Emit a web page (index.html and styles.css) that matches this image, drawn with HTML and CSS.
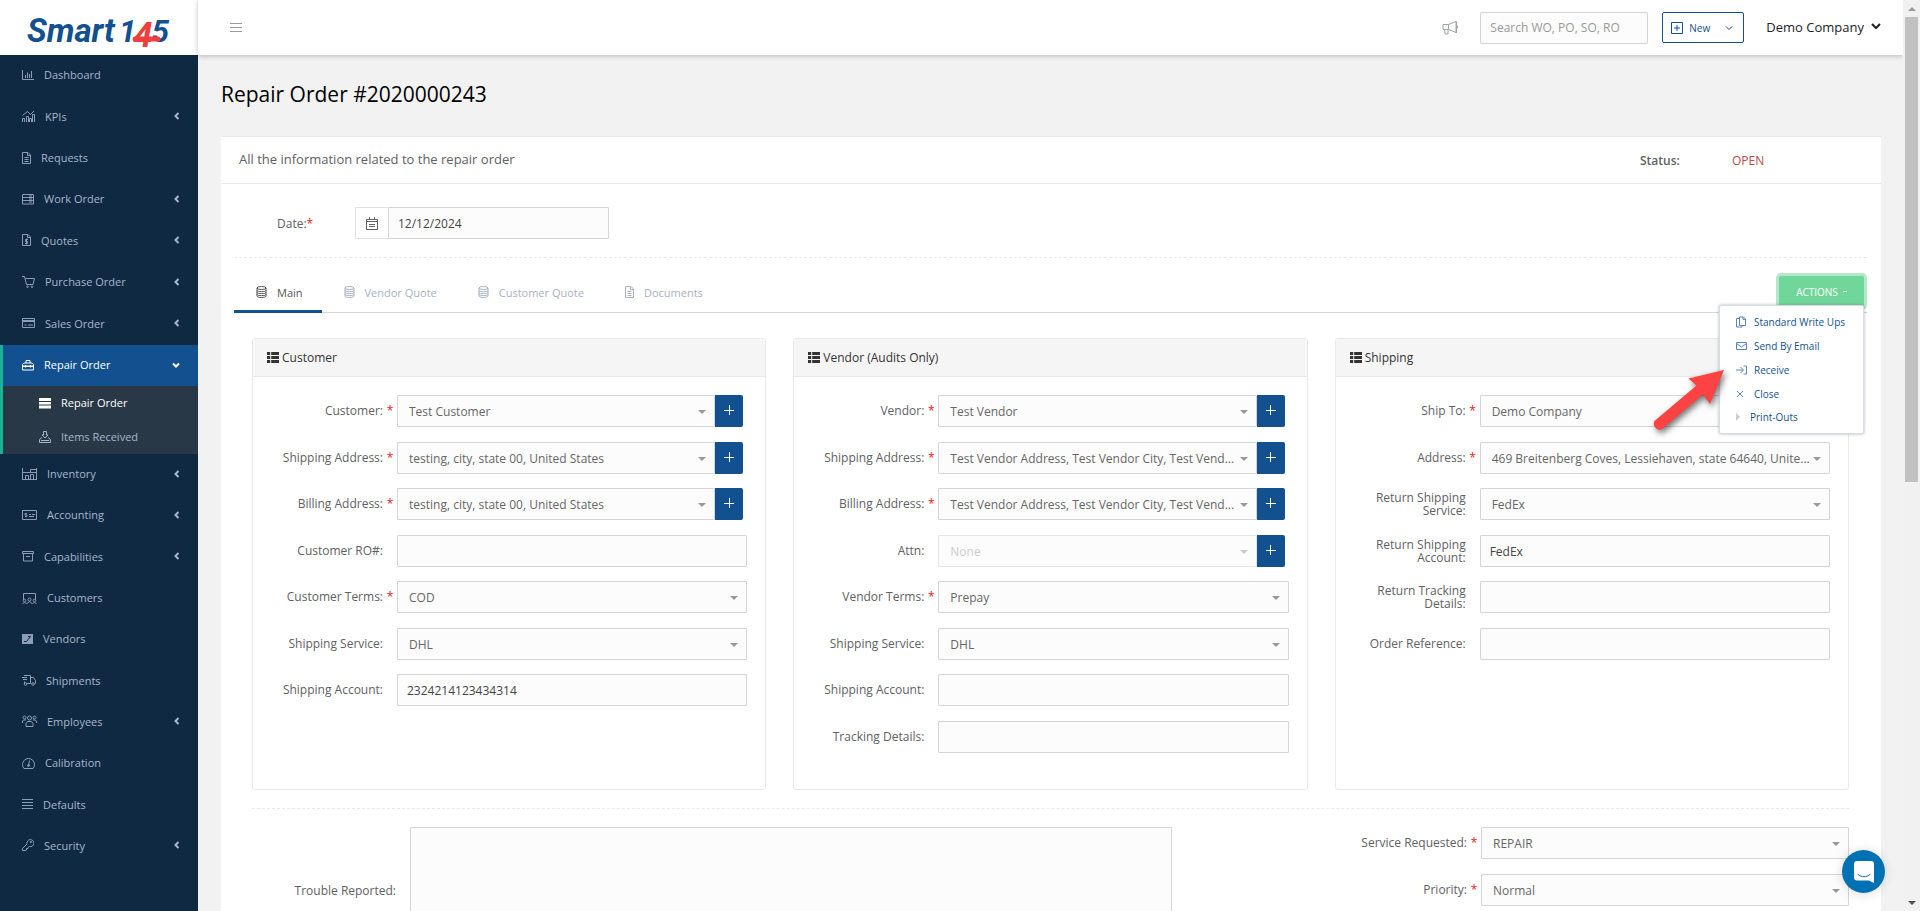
FILE: index.html
```html
<!DOCTYPE html>
<html lang="en">
<head>
<meta charset="utf-8">
<title>Repair Order #2020000243</title>
<link rel="stylesheet" href="styles.css">
</head>
<body>
<svg class="sprite" aria-hidden="true">
  <symbol id="i-bars" viewBox="0 0 12 12"><path d="M.5 1v9.500H12M3.500 9V6M5.500 9V3.500M7.500 9V5M9.500 9V2"/></symbol>
  <symbol id="i-kpi" viewBox="0 0 13 12"><path d="M.5 12V8.500h2V12M4.500 12V6.500h2V12M7.500 12V8.500h2V12M10.500 12V4.500h2V12M.5 5.500l5-4 3 3L12 1"/></symbol>
  <symbol id="i-file" viewBox="0 0 9 12"><path d="M.5.5H6L8.500 3v8.500h-8zM5.500.5V3.500h3M2.500 5.500h4M2.500 7.500h4M2.500 9.500h4"/></symbol>
  <symbol id="i-work" viewBox="0 0 12 12"><path d="M.5 1.500h11v9.500H.5zM.5 4.500h11M.5 7.500h11M7 3h3M7 6h3M7 9h3"/></symbol>
  <symbol id="i-quote" viewBox="0 0 9 12"><path d="M.5.5H6L8.500 3v8.500h-8zM5.500.5V3.500h3M6 5.500H3.500v2h2v2H3M4.500 4.500v6"/></symbol>
  <symbol id="i-cart" viewBox="0 0 13 12"><path d="M0 .5h2.500l2 8H11l1.500-6H3.500"/><circle cx="5.500" cy="10.700" r=".8"/><circle cx="10" cy="10.700" r=".8"/></symbol>
  <symbol id="i-card" viewBox="0 0 13 12"><path d="M.5 1.500h12v9H.5zM.5 3.500h12M.5 4.500h12M2.500 8h2M6 8h5"/></symbol>
  <symbol id="i-tool" viewBox="0 0 12 12"><path d="M.5 7V5.500L2 4h8l1.500 1.500V7zM.5 7v4h11V7M4 4V1.500h4V4M3.500 6v2.500M8.500 6v2.500M0 7.500h12"/></symbol>
  <symbol id="i-server" viewBox="0 0 12 12"><path class="solid" d="M0 1h12v3H0zM0 5h12v2.500H0zM0 8.500h12v3H0z"/></symbol>
  <symbol id="i-inbox" viewBox="0 0 12 12"><path d="M4.500.5h3V4H9L6 7 3 4h1.500zM3 6.500.5 8.500v3h11v-3L9 6.500M2 9.500h8"/></symbol>
  <symbol id="i-store" viewBox="0 0 15 12"><path d="M.5 0v12M.5 4.500h8v-3h6M14.500 0v12M.5 11.500h14M3.500 11V7.500h3V11M8.500 11V6.500h3V11M8.500 4.500h6"/></symbol>
  <symbol id="i-money" viewBox="0 0 15 12"><path d="M.5 1.500h14v9H.5zM5 4.500H3v1.500h2v1.500H3M7 5.500h2M10 5.500h3M7 7.500h5"/></symbol>
  <symbol id="i-box" viewBox="0 0 12 12"><path d="M.5 1.500h11v2H.5zM1.500 3.500v7.500h9V3.500M4 6.500h4"/></symbol>
  <symbol id="i-people" viewBox="0 0 15 12"><path d="M1.500 8V1.500h12V8M.5 12l2-2 2 2 3-2.500 3 2.500 2-2 2 2"/><circle cx="2.500" cy="8.500" r="1.300"/><circle cx="7.500" cy="7.500" r="1.500"/><circle cx="12.500" cy="8.500" r="1.300"/></symbol>
  <symbol id="i-check" viewBox="0 0 11 12"><path class="solid" d="M0 1h11v10H0z"/><path class="cut" d="M2 8.500h2.500l4-5H6"/></symbol>
  <symbol id="i-truck" viewBox="0 0 14 12"><path d="M2 1.500h6.500v8H5M8.500 3.500h3l2 3v3h-1M0 3.500h5M1 5.500h4M2.500 7.500v2"/><circle cx="3.500" cy="10" r="1.300"/><circle cx="11" cy="10" r="1.300"/></symbol>
  <symbol id="i-team" viewBox="0 0 15 12"><circle cx="2.500" cy="2.500" r="1.500"/><circle cx="7.500" cy="3" r="2"/><circle cx="12.500" cy="2.500" r="1.500"/><path d="M.5 8V6l1.500-1h2M14.500 8V6L13 5h-2M4 11.500V8.500L5.500 6.500h4L11 8.500v3z"/></symbol>
  <symbol id="i-gauge" viewBox="0 0 13 12"><path d="M2 11.500A6 6 0 1 1 11 11.500zM6.500 9l1-5.500"/><circle cx="6.500" cy="8.500" r="1"/></symbol>
  <symbol id="i-lines" viewBox="0 0 11 12"><path d="M0 1.500h11M0 4.500h11M0 7.500h11M0 10.500h11"/></symbol>
  <symbol id="i-key" viewBox="0 0 12 12"><path d="M5 5a3.500 3.500 0 1 1 2.500 2.500L6 8.500v1H4.500V11L3 11.500H.5v-2z"/><circle cx="9" cy="3" r=".7"/></symbol>
  <symbol id="i-db" viewBox="0 0 11 12"><ellipse cx="5.500" cy="2" rx="4.500" ry="1.500"/><path d="M1 2v8c0 2 9 2 9 0V2M1 4.500c0 1.500 9 1.500 9 0M1 6.500c0 1.500 9 1.500 9 0M1 8.500c0 1.500 9 1.500 9 0"/></symbol>
  <symbol id="i-list" viewBox="0 0 12 11"><path class="solid" d="M0 0h3.200v3H0zM4.200 0H12v3H4.200zM0 4h3.200v3H0zM4.200 4H12v3H4.200zM0 8h3.200v3H0zM4.200 8H12v3H4.200z"/></symbol>
  <symbol id="i-left" viewBox="0 0 6 8"><path d="M4.500 1 1.500 4l3 3"/></symbol>
  <symbol id="i-down" viewBox="0 0 8 6"><path d="M1 1.500l3 3 3-3"/></symbol>
</svg>

<div class="app">
  <aside class="sidebar">
    <a class="brand" href="#" aria-label="Smart 145">
      <svg class="logo" viewBox="0 0 150 40" width="150" height="40">
        <text x="0" y="29" font-size="33">Smart</text>
        <text x="92" y="29" font-size="31">1<tspan class="logo-red" font-size="35" dy="5" dx="-3">4</tspan><tspan dy="-5" dx="-1">5</tspan></text>
        <path class="swoosh" d="M108 26h23"/>
      </svg>
    </a>
    <nav class="menu">
      <ul class="menu-group before">
        <li><a href="#"><svg width="12" height="12"><use href="#i-bars"/></svg>Dashboard</a></li>
        <li><a href="#"><svg width="13" height="12"><use href="#i-kpi"/></svg>KPIs<svg class="caret" width="6" height="8"><use href="#i-left"/></svg></a></li>
        <li><a href="#"><svg width="9" height="12"><use href="#i-file"/></svg>Requests</a></li>
        <li><a href="#"><svg width="12" height="12"><use href="#i-work"/></svg>Work Order<svg class="caret" width="6" height="8"><use href="#i-left"/></svg></a></li>
        <li><a href="#"><svg width="9" height="12"><use href="#i-quote"/></svg>Quotes<svg class="caret" width="6" height="8"><use href="#i-left"/></svg></a></li>
        <li><a href="#"><svg width="13" height="12"><use href="#i-cart"/></svg>Purchase Order<svg class="caret" width="6" height="8"><use href="#i-left"/></svg></a></li>
        <li><a href="#"><svg width="13" height="12"><use href="#i-card"/></svg>Sales Order<svg class="caret" width="6" height="8"><use href="#i-left"/></svg></a></li>
      </ul>
      <div class="menu-open">
        <a class="current" href="#"><svg width="12" height="12"><use href="#i-tool"/></svg>Repair Order<svg class="caret" width="8" height="6"><use href="#i-down"/></svg></a>
        <ul class="submenu">
          <li><a class="on" href="#"><svg width="12" height="12"><use href="#i-server"/></svg>Repair Order</a></li>
          <li><a href="#"><svg width="12" height="12"><use href="#i-inbox"/></svg>Items Received</a></li>
        </ul>
      </div>
      <ul class="menu-group after">
        <li><a href="#"><svg width="15" height="12"><use href="#i-store"/></svg>Inventory<svg class="caret" width="6" height="8"><use href="#i-left"/></svg></a></li>
        <li><a href="#"><svg width="15" height="12"><use href="#i-money"/></svg>Accounting<svg class="caret" width="6" height="8"><use href="#i-left"/></svg></a></li>
        <li><a href="#"><svg width="12" height="12"><use href="#i-box"/></svg>Capabilities<svg class="caret" width="6" height="8"><use href="#i-left"/></svg></a></li>
        <li><a href="#"><svg width="15" height="12"><use href="#i-people"/></svg>Customers</a></li>
        <li><a href="#"><svg width="11" height="12"><use href="#i-check"/></svg>Vendors</a></li>
        <li><a href="#"><svg width="14" height="12"><use href="#i-truck"/></svg>Shipments</a></li>
        <li><a href="#"><svg width="15" height="12"><use href="#i-team"/></svg>Employees<svg class="caret" width="6" height="8"><use href="#i-left"/></svg></a></li>
        <li><a href="#"><svg width="13" height="12"><use href="#i-gauge"/></svg>Calibration</a></li>
        <li><a href="#"><svg width="11" height="12"><use href="#i-lines"/></svg>Defaults</a></li>
        <li><a href="#"><svg width="12" height="12"><use href="#i-key"/></svg>Security<svg class="caret" width="6" height="8"><use href="#i-left"/></svg></a></li>
      </ul>
    </nav>
  </aside>

  <div class="main">
    <header class="topbar">
      <button class="plain burger" type="button" aria-label="Toggle menu"><svg width="12" height="12" viewBox="0 0 12 12"><path d="M0 1.500h12M0 5.500h12M0 9.500h12"/></svg></button>
      <button class="plain horn" type="button" aria-label="Announcements"><svg width="16" height="14" viewBox="0 0 16 14"><path d="M1 3.500h5.500v5H1zM6.500 3.500l7.500-3v11l-7.500-3M14.500.5V12M2.500 8.500l.5 4.500h3V8.500M14.500 5h1v2h-1"/></svg></button>
      <input class="search" type="text" placeholder="Search WO, PO, SO, RO" aria-label="Search">
      <button class="new" type="button"><svg width="12" height="12" viewBox="0 0 12 12"><path d="M.5.5h11v11H.5zM6 3v6M3 6h6"/></svg>New<svg class="new-caret" width="8" height="6"><use href="#i-down"/></svg></button>
      <button class="plain account" type="button">Demo Company<svg width="10" height="7" viewBox="0 0 10 7"><path d="M1 1l4 4 4-4"/></svg></button>
    </header>

    <main class="content">
      <h1>Repair Order #2020000243</h1>
      <section class="box">
        <div class="box-head">
          <h2>All the information related to the repair order</h2>
          <span class="status">Status:</span><span class="status-value">OPEN</span>
        </div>
        <div class="box-body">
          <div class="date-row">
            <label for="date">Date:<span class="red">*</span></label>
            <span class="date-icon"><svg width="12" height="13" viewBox="0 0 12 13"><path d="M.5 2.500h11v10H.5zM.5 4.500h11M3.500 0v2.500M8.500 0v2.500M3 7.500h6M3 9.500h6"/></svg></span>
            <input id="date" type="text" value="12/12/2024">
          </div>

          <div class="tabs">
            <a class="tab active" href="#"><svg width="11" height="12"><use href="#i-db"/></svg>Main</a>
            <a class="tab" href="#"><svg width="11" height="12"><use href="#i-db"/></svg>Vendor Quote</a>
            <a class="tab" href="#"><svg width="11" height="12"><use href="#i-db"/></svg>Customer Quote</a>
            <a class="tab" href="#"><svg width="9" height="12"><use href="#i-file"/></svg>Documents</a>
            <div class="actions">
              <button class="actions-btn" type="button">ACTIONS<span class="actions-caret"></span></button>
              <div class="dropdown">
                <a href="#"><svg width="11" height="12" viewBox="0 0 11 12"><path d="M3.500 1h4L9.500 3v6.500h-6zM3.500 2.500h-3v8.500h5.500V9.500M7 1v2.500h2.500"/></svg>Standard Write Ups</a>
                <a href="#"><svg width="11" height="12" viewBox="0 0 11 12"><path d="M.5 2.500h10v7H.5zM.5 3.500l5 3.500 5-3.500"/></svg>Send By Email</a>
                <a href="#"><svg width="11" height="12" viewBox="0 0 11 12"><path d="M0 6h7M4.500 3l3 3-3 3M7.500 2h3v8h-3"/></svg>Receive</a>
                <a href="#"><svg width="11" height="12" viewBox="0 0 11 12"><path d="M1 3l6 6M7 3L1 9"/></svg>Close</a>
                <a class="sub" href="#"><svg width="4" height="8" viewBox="0 0 4 8"><path class="tri" d="M0 0l4 4-4 4z"/></svg>Print-Outs</a>
                <svg class="pointer" width="84" height="76" viewBox="0 0 84 76"><path d="M75 7 39.500 15.500 47.500 22.500 5.500 58A6 6 0 0 0 12.500 66.500L54 31.500 61 41Z"/></svg>
              </div>
            </div>
          </div>

          <div class="pane">
            <div class="cards">
              <section class="card">
                <h3><svg width="12" height="11"><use href="#i-list"/></svg>Customer</h3>
                <div class="fields">
                  <div class="row"><label for="c1">Customer:<span class="req">*</span></label><div class="sel"><select id="c1"><option>Test Customer</option></select></div><button class="add" type="button" aria-label="Add customer"></button></div>
                  <div class="row"><label for="c2">Shipping Address:<span class="req">*</span></label><div class="sel"><select id="c2"><option>testing, city, state 00, United States</option></select></div><button class="add" type="button" aria-label="Add shipping address"></button></div>
                  <div class="row"><label for="c3">Billing Address:<span class="req">*</span></label><div class="sel"><select id="c3"><option>testing, city, state 00, United States</option></select></div><button class="add" type="button" aria-label="Add billing address"></button></div>
                  <div class="row"><label for="c4">Customer RO#:</label><input id="c4" type="text"></div>
                  <div class="row"><label for="c5">Customer Terms:<span class="req">*</span></label><div class="sel"><select id="c5"><option>COD</option></select></div></div>
                  <div class="row"><label for="c6">Shipping Service:</label><div class="sel"><select id="c6"><option>DHL</option></select></div></div>
                  <div class="row"><label for="c7">Shipping Account:</label><input id="c7" type="text" value="2324214123434314"></div>
                </div>
              </section>
              <section class="card">
                <h3><svg width="12" height="11"><use href="#i-list"/></svg>Vendor (Audits Only)</h3>
                <div class="fields">
                  <div class="row"><label for="v1">Vendor:<span class="req">*</span></label><div class="sel"><select id="v1"><option>Test Vendor</option></select></div><button class="add" type="button" aria-label="Add vendor"></button></div>
                  <div class="row"><label for="v2">Shipping Address:<span class="req">*</span></label><div class="sel"><select id="v2"><option>Test Vendor Address, Test Vendor City, Test Vend...</option></select></div><button class="add" type="button" aria-label="Add shipping address"></button></div>
                  <div class="row"><label for="v3">Billing Address:<span class="req">*</span></label><div class="sel"><select id="v3"><option>Test Vendor Address, Test Vendor City, Test Vend...</option></select></div><button class="add" type="button" aria-label="Add billing address"></button></div>
                  <div class="row"><label for="v4">Attn:</label><div class="sel off"><select id="v4" disabled><option>None</option></select></div><button class="add" type="button" aria-label="Add contact"></button></div>
                  <div class="row"><label for="v5">Vendor Terms:<span class="req">*</span></label><div class="sel"><select id="v5"><option>Prepay</option></select></div></div>
                  <div class="row"><label for="v6">Shipping Service:</label><div class="sel"><select id="v6"><option>DHL</option></select></div></div>
                  <div class="row"><label for="v7">Shipping Account:</label><input id="v7" type="text"></div>
                  <div class="row"><label for="v8">Tracking Details:</label><input id="v8" type="text"></div>
                </div>
              </section>
              <section class="card">
                <h3><svg width="12" height="11"><use href="#i-list"/></svg>Shipping</h3>
                <div class="fields">
                  <div class="row"><label for="s1">Ship To:<span class="req">*</span></label><div class="sel"><select id="s1"><option>Demo Company</option></select></div></div>
                  <div class="row"><label for="s2">Address:<span class="req">*</span></label><div class="sel"><select id="s2"><option>469 Breitenberg Coves, Lessiehaven, state 64640, Unite...</option></select></div></div>
                  <div class="row"><label for="s3">Return Shipping Service:</label><div class="sel"><select id="s3"><option>FedEx</option></select></div></div>
                  <div class="row"><label for="s4">Return Shipping Account:</label><input id="s4" type="text" value="FedEx"></div>
                  <div class="row"><label for="s5">Return Tracking Details:</label><input id="s5" type="text"></div>
                  <div class="row"><label for="s6">Order Reference:</label><input id="s6" type="text"></div>
                </div>
              </section>
            </div>

            <div class="lower">
              <label for="trouble">Trouble Reported:</label>
              <textarea id="trouble"></textarea>
              <div class="fields-lower">
                <div class="row"><label for="l1">Service Requested:<span class="req">*</span></label><div class="sel"><select id="l1"><option>REPAIR</option></select></div></div>
                <div class="row"><label for="l2">Priority:<span class="req">*</span></label><div class="sel"><select id="l2"><option>Normal</option></select></div></div>
              </div>
            </div>
          </div>
        </div>
      </section>
    </main>
  </div>

  <div class="scrollbar" aria-hidden="true">
    <span class="scroll-up"></span>
    <span class="scroll-thumb"></span>
    <span class="scroll-down"></span>
  </div>
</div>

<button class="chat" type="button" aria-label="Open chat"><svg width="20" height="22" viewBox="0 0 20 22"><path class="bubble" d="M3 0h14a3 3 0 0 1 3 3v19l-5-2.500H3a3 3 0 0 1-3-3V3a3 3 0 0 1 3-3z"/><path class="smile" d="M4 13.500c3.500 3 8.500 3 12 0"/></svg></button>
</body>
</html>
```

FILE: styles.css
```css
* { box-sizing: border-box; }

html, body { height: 100%; }

body {
  margin: 0;
  overflow: hidden;
  background: #f2f2f2;
  color: #5e6163;
  font-family: "Open Sans", "Noto Sans", sans-serif;
  font-size: 12px;
}

h1, h2, h3, ul { margin: 0; padding: 0; font-weight: 400; }
ul { list-style: none; }
a { color: inherit; text-decoration: none; }
button, input, select, textarea { font-family: inherit; font-size: 12px; }
svg { flex: none; fill: none; stroke: currentColor; stroke-width: 1; }
.sprite { position: absolute; width: 0; height: 0; }
.solid { fill: currentColor; stroke: none; }
.cut { stroke: #0f2942; }
.red { color: #e21b1b; }

.app { display: flex; height: 100vh; }

/* Sidebar */
.sidebar {
  flex: none;
  width: 198px;
  background: #0f2942;
  color: #a7b6cc;
  font-size: 11px;
}
.brand {
  display: flex;
  height: 55px;
  padding: 13px 0 0 27px;
  background: #fff;
}
.logo {
  overflow: visible;
  fill: #12508f;
  stroke: none;
  font-family: Roboto, "Open Sans", sans-serif;
  font-weight: 700;
  font-style: italic;
}
.logo-red { fill: #f03e3e; }
.swoosh { fill: none; stroke: #f03e3e; stroke-width: 5; stroke-linecap: round; }

.menu-group { display: grid; grid-auto-rows: 1fr; }
.before { height: 290px; }
.after { height: 413px; }
.menu-group a, .current {
  display: flex;
  align-items: center;
  gap: 10px;
  height: 100%;
  padding: 0 18px 2px 22px;
}
.menu-group svg { color: #8b9dba; }
.menu-group .caret, .current .caret { margin-left: auto; color: inherit; stroke-width: 2; }
.menu-open { border-left: 3px solid #1ab394; }
.current {
  height: 41px;
  padding-left: 19px;
  background: #12508f;
  color: #fff;
  font-weight: 500;
}
.submenu { background: #293846; }
.submenu a {
  display: flex;
  align-items: center;
  gap: 10px;
  height: 34px;
  padding: 0 0 1px 36px;
}
.submenu .on { color: #fff; font-weight: 500; }

/* Top bar */
.main { flex: 1; min-width: 0; }
.topbar {
  display: flex;
  align-items: center;
  height: 55px;
  padding: 0 22px 0 32px;
  background: #fff;
  box-shadow: 0 1px 5px rgba(0, 0, 0, .25);
}
.plain { display: flex; align-items: center; padding: 0; border: 0; background: none; }
.burger { color: #999c9e; }
.horn { margin-left: auto; color: #a0a3a6; }
.search {
  width: 168px;
  height: 33px;
  margin: 0 14px 0 22px;
  padding: 0 9px;
  border: 1px solid #d8d8d8;
  background: #fcfcfc;
}
.search::placeholder { color: #999; }
.new {
  display: flex;
  align-items: center;
  gap: 6px;
  width: 82px;
  height: 31px;
  padding: 0 10px 0 8px;
  border: 1px solid #12508f;
  border-radius: 2px;
  background: #fff;
  color: #12508f;
  font-size: 10px;
}
.new-caret { margin-left: auto; }
.account { gap: 7px; margin-left: 22px; padding-bottom: 2px; color: #222; font-size: 13px; }
.account svg { stroke-width: 2; }

/* Page */
.content { padding: 0 22px 0 23px; }
h1 { height: 81px; color: #000; font-size: 21px; line-height: 78px; }
.box { border-top: 1px solid #e7eaec; background: #fff; }
.box-head {
  display: flex;
  align-items: center;
  height: 47px;
  padding-left: 18px;
  border-bottom: 1px solid #e7eaec;
}
h2 { flex: 1; padding-bottom: 3px; font-size: 13px; font-weight: 500; }
.status { width: 92px; font-weight: 600; }
.status-value { width: 149px; color: #b94a48; }
.box-body { padding: 0 14px 0 13px; }

input[type="text"], select, textarea {
  height: 32px;
  border: 1px solid #d5d5d5;
  border-radius: 1px;
  background: #fcfcfc;
  color: #444;
}
.date-row {
  display: flex;
  align-items: center;
  padding: 23px 0 18px 43px;
  border-bottom: 1px dashed #e7eaec;
}
.date-row label { width: 78px; }
.date-icon {
  display: flex;
  align-items: center;
  justify-content: center;
  width: 33px;
  height: 32px;
  border: 1px solid #e2e2e2;
  border-right: 0;
}
.date-row input { width: 221px; padding: 0 9px; }

.tabs {
  display: flex;
  height: 40px;
  margin-top: 15px;
  border-bottom: 1px solid #d5d5d5;
}
.tab {
  display: flex;
  align-items: center;
  gap: 10px;
  height: 40px;
  padding: 1px 19px 0 22px;
  border-bottom: 3px solid transparent;
  color: #a7b1c2;
  font-size: 11px;
}
.tab.active { border-color: #12508f; color: #555; }
.actions { position: relative; margin: 3px 3px 0 auto; }
.actions-btn {
  display: flex;
  align-items: center;
  justify-content: center;
  gap: 5px;
  width: 85px;
  height: 31px;
  border: 0;
  border-radius: 2px;
  background: #71d699;
  box-shadow: 0 0 0 3px #b3e8c9;
  color: #fff;
  font-size: 10px;
  font-weight: 500;
}
.actions-caret { width: 4px; height: 1px; background: #fff; }
.dropdown {
  position: absolute;
  z-index: 2;
  top: 29px;
  right: 0;
  width: 145px;
  padding: 4px 0 5px;
  border: 1px solid #d9dce3;
  border-radius: 2px;
  background: #fff;
  box-shadow: 0 0 3px rgba(86, 96, 117, .5);
  color: #12508f;
  font-size: 10px;
}
.dropdown a {
  display: flex;
  align-items: center;
  gap: 7px;
  height: 24px;
  padding-left: 16px;
}
.dropdown a svg { color: #5d86b3; }
.dropdown .sub { height: 22px; gap: 10px; }
.tri { fill: #ccc; stroke: none; }
.pointer {
  position: absolute;
  top: 57px;
  left: -71px;
  overflow: visible;
  filter: drop-shadow(2px 3px 3px rgba(0, 0, 0, .55));
}
.pointer path { fill: #fc4242; stroke: none; }

/* Cards */
.pane { padding: 25px 18px 0; }
.cards { display: grid; grid-template-columns: repeat(3, minmax(0, 1fr)); gap: 27px; }
.card { border: 1px solid #e7eaec; border-radius: 3px; }
h3 {
  display: flex;
  align-items: center;
  gap: 3px;
  height: 38px;
  padding-left: 14px;
  border-bottom: 1px solid #e7eaec;
  background: #f5f5f5;
  color: #333;
  font-size: 12px;
  font-weight: 500;
}
.fields { padding: 18px 18px 22px 24px; }
.row { display: flex; align-items: center; height: 32px; margin-bottom: 14px; }
.row:nth-child(odd) { margin-bottom: 15px; }
.row label {
  flex: none;
  width: 120px;
  padding: 0 14px 1px 0;
  font-weight: 500;
  line-height: 13px;
  text-align: right;
}
.req { float: right; width: 14px; margin-right: -14px; color: #e21b1b; text-align: center; }
.row > input { flex: 1; min-width: 0; padding: 0 9px; }
.sel { position: relative; flex: 1; min-width: 0; }
.sel::after {
  content: "";
  position: absolute;
  top: 15px;
  right: 9px;
  border: 4px solid transparent;
  border-top-color: #999;
  border-bottom: 0;
}
.sel select {
  display: block;
  width: 100%;
  padding: 1px 18px 0 11px;
  appearance: none;
  color: #666;
}
.off select { border-color: #e5e5e5; color: #ccc; opacity: 1; }
.off::after { border-top-color: #ccc; }
.add {
  position: relative;
  flex: none;
  width: 28px;
  height: 32px;
  margin-right: 4px;
  border: 0;
  border-radius: 0 2px 2px 0;
  background:
    linear-gradient(#fff, #fff) center 15px / 10px 1px no-repeat,
    linear-gradient(#fff, #fff) center 10px / 1px 10px no-repeat,
    #12508f;
}

.lower {
  display: grid;
  grid-template-columns: 158px minmax(0, 762fr) minmax(0, 677fr);
  margin-top: 18px;
  padding-top: 18px;
  border-top: 1px dashed #e7eaec;
}
.lower > label { padding-right: 14px; align-self: center; font-weight: 500; text-align: right; }
.lower textarea { height: 126px; resize: none; }
.fields-lower .row label { width: 309px; }

/* Window scrollbar */
.scrollbar {
  flex: none;
  display: flex;
  flex-direction: column;
  align-items: center;
  width: 17px;
  background: #f1f1f1;
}
.scroll-up { margin: 7px 0 6px; border: 4px solid transparent; border-top: 0; border-bottom-color: #999; }
.scroll-thumb { width: 13px; height: 51%; background: #c1c1c1; }
.scroll-down { margin: auto 0 6px; border: 4px solid transparent; border-bottom: 0; border-top-color: #505050; }

.chat {
  position: fixed;
  z-index: 3;
  right: 35px;
  bottom: 18px;
  display: flex;
  align-items: center;
  justify-content: center;
  width: 43px;
  height: 43px;
  padding: 0;
  border: 0;
  border-radius: 50%;
  background: #0071b2;
  box-shadow: 0 1px 12px rgba(0, 0, 0, .15);
}
.bubble { fill: #fff; stroke: none; }
.smile { stroke: #0071b2; stroke-linecap: round; }
```
